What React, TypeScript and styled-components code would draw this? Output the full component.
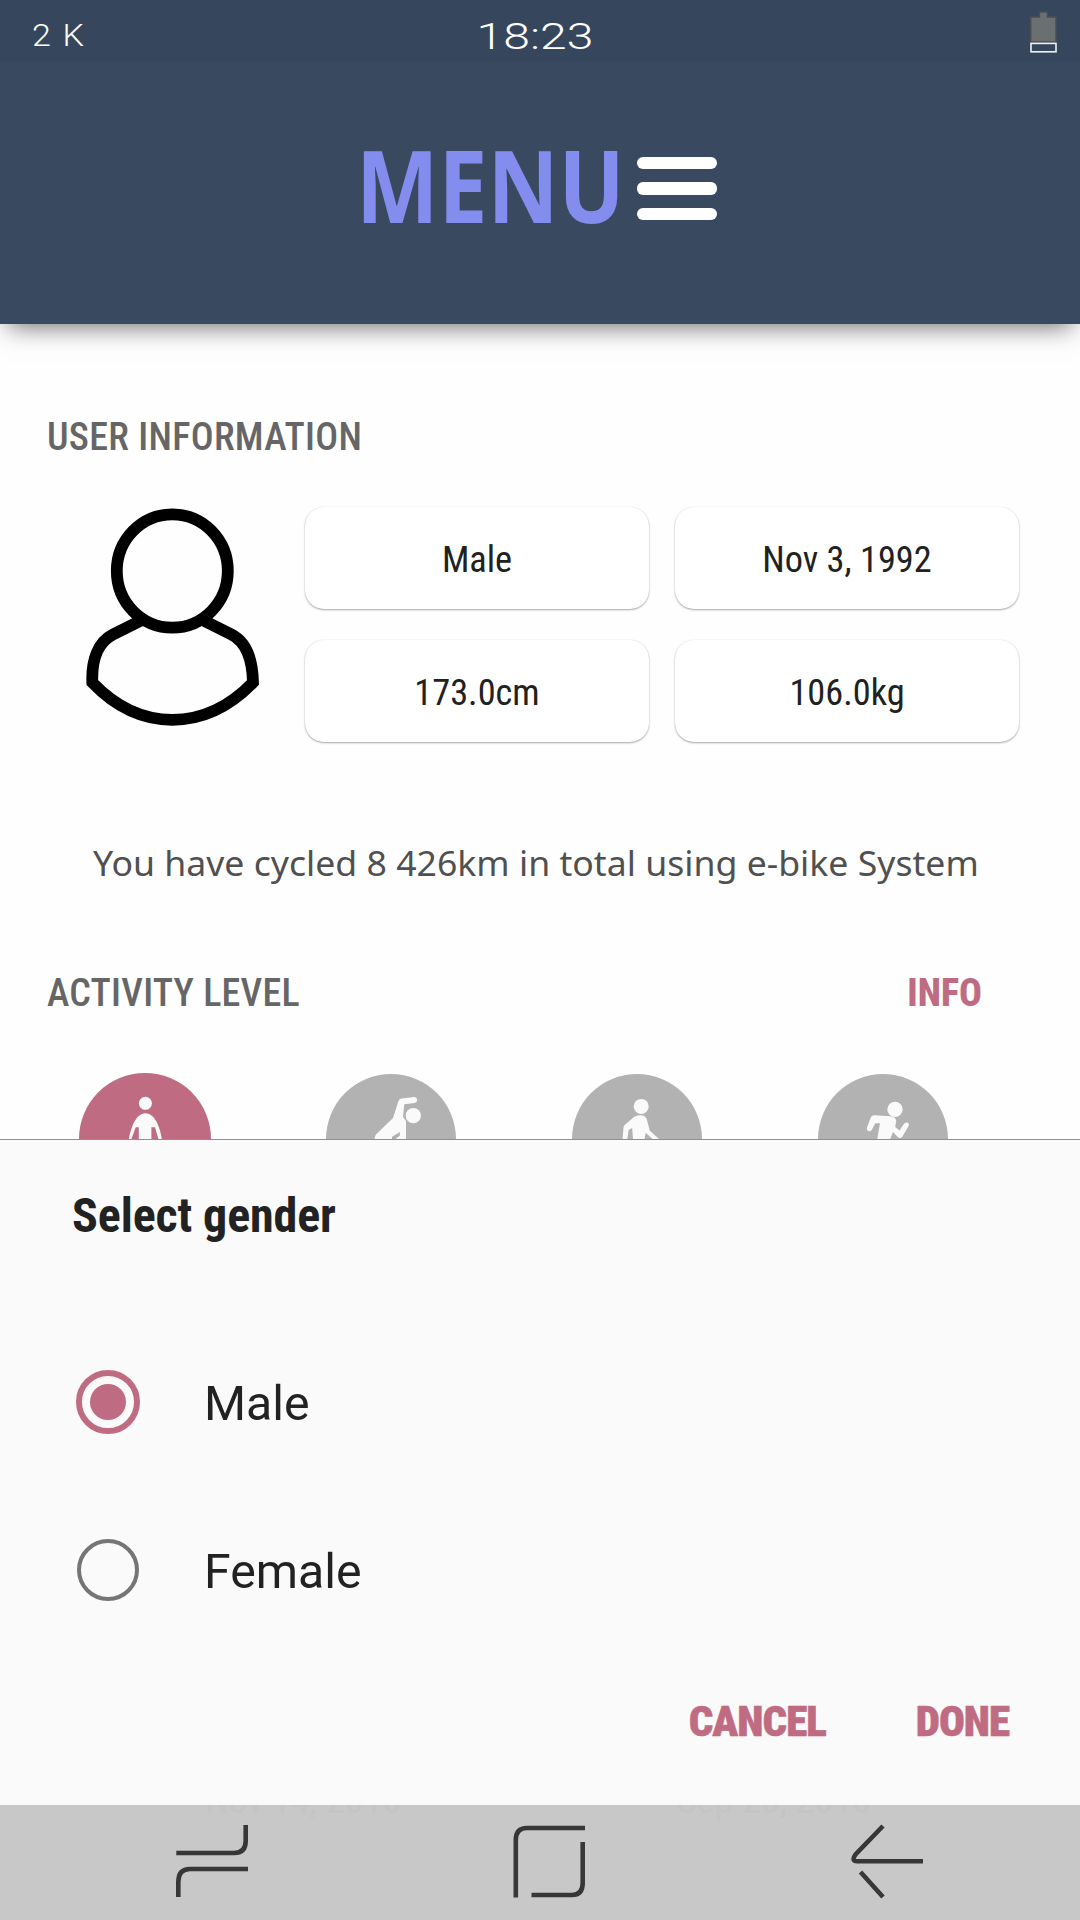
import React, { useState } from 'react';
import styled, { createGlobalStyle } from 'styled-components';

const accent = '#bf6b82';
const condensed = '"Roboto Condensed", Roboto, sans-serif';

const GlobalStyle = createGlobalStyle`
  *, *::before, *::after { box-sizing: border-box; }
  body { margin: 0; background: #fff; }
  button { border: 0; padding: 0; margin: 0; background: none; font: inherit; color: inherit; cursor: pointer; }
`;

const Screen = styled.main`
  display: flex;
  flex-direction: column;
  width: 1080px;
  height: 1920px;
  overflow: hidden;
  background: #fefefe;
  font-family: ${condensed};
`;

const Header = styled.header`
  flex: none;
  display: flex;
  flex-direction: column;
  height: 324px;
  background: #394a60;
  box-shadow: 0 10px 24px -8px rgba(0, 0, 0, 0.6);
`;

const StatusBar = styled.div`
  flex: none;
  display: grid;
  grid-template-columns: 1fr auto 1fr;
  height: 62px;
  padding: 0 22px 0 32px;
  background: #36475d;
  color: #fff;
  font-family: Roboto, sans-serif;
`;

const Network = styled.span`
  justify-self: start;
  margin-top: 16px;
  font-size: 31px;
  line-height: 40px;
  font-weight: 300;
  word-spacing: 3px;
  transform: scaleX(1.1);
  transform-origin: left;
`;

const Clock = styled.time`
  margin: 17px 0 0 -21px;
  font-size: 37px;
  line-height: 40px;
  font-weight: 350;
  transform: scaleX(1.3);
`;

const BatteryIcon = styled.svg`
  justify-self: end;
  width: 30px;
  height: 46px;
  margin-top: 9px;
`;

const MenuButton = styled.button`
  display: flex;
  align-items: center;
  width: 362px;
  height: 110px;
  margin: 69px 0 0 356px;
`;

const MenuLabel = styled.span`
  width: 281px;
  margin-top: -5px;
  color: #838dee;
  font: 700 101px/110px "Open Sans", sans-serif;
  text-align: left;
  transform: scaleX(0.866);
  transform-origin: left;
  white-space: nowrap;
`;

const MenuBars = styled.span`
  flex: none;
  display: flex;
  flex-direction: column;
  gap: 13px;
  width: 80px;
  margin-top: 5px;
`;

const MenuBar = styled.span`
  height: 12.6px;
  border-radius: 6px;
  background: #fff;
`;

const Content = styled.section`
  flex: none;
  display: flex;
  flex-direction: column;
  height: 815px;
  padding-top: 93px;
  overflow: hidden;
`;

const SectionTitle = styled.h2<{ $tracking: number }>`
  margin: 0;
  color: #666;
  font-size: 38px;
  line-height: 40px;
  font-weight: 500;
  letter-spacing: ${(p) => p.$tracking}px;
`;

const TitleRow = styled.div`
  display: flex;
  justify-content: space-between;
  padding: 0 98px 0 47px;
`;

const Profile = styled.div`
  display: flex;
  gap: 45px;
  height: 237px;
  margin-top: 49px;
  padding-left: 86px;
`;

const UserIcon = styled.svg`
  flex: none;
  width: 174px;
  height: 222px;
`;

const Fields = styled.div`
  display: grid;
  grid-template-columns: 344px 344px;
  grid-auto-rows: 102px;
  gap: 31px 26px;
  padding-top: 1px;
`;

const Field = styled.button`
  padding-top: 4px;
  border-radius: 19px;
  background: #fff;
  box-shadow: 0 1px 2px rgba(0, 0, 0, 0.34), 0 0 1px rgba(0, 0, 0, 0.12);
  color: #212121;
  font-size: 36.3px;
  line-height: 40px;
  text-align: center;
`;

const Distance = styled.p`
  margin: 97px 0 87px 93px;
  width: 860px;
  color: #505050;
  font: 400 34px/46px "Noto Sans", "Open Sans", sans-serif;
  white-space: nowrap;
  transform: scaleX(1.048);
  transform-origin: left;
`;

const InfoButton = styled.button`
  color: ${accent};
  font-size: 38px;
  line-height: 40px;
  font-weight: 800;
`;

const Activities = styled.div`
  display: grid;
  grid-template-columns: repeat(4, 246px);
  justify-items: center;
  align-items: start;
  height: 66px;
  margin: 60px 0 0 22px;
  overflow: hidden;
`;

const Activity = styled.button<{ $active?: boolean }>`
  width: ${(p) => (p.$active ? 132 : 130)}px;
  height: ${(p) => (p.$active ? 132 : 130)}px;
  margin-top: ${(p) => (p.$active ? 0 : 1)}px;
  border-radius: 50%;
  background: ${(p) => (p.$active ? accent : '#b2b2b2')};
  color: #fafafa;
`;

const Figure = styled.svg`
  display: block;
  width: 100%;
  height: 100%;
`;

const Sheet = styled.section`
  flex: none;
  display: flex;
  flex-direction: column;
  height: 666px;
  padding: 46px 72px 0;
  border-top: 1px solid #8f8f8f;
  background: #fafafa;
`;

const SheetTitle = styled.h1`
  margin: 0 0 116px;
  color: #222;
  font-size: 48px;
  line-height: 60px;
  font-weight: 700;
  letter-spacing: -0.1px;
`;

const Options = styled.div`
  display: flex;
  flex-direction: column;
  gap: 88px;
`;

const Option = styled.button`
  display: flex;
  align-items: center;
  gap: 64px;
  height: 80px;
  padding-left: 4px;
`;

const Radio = styled.span<{ $checked: boolean }>`
  flex: none;
  display: grid;
  place-items: center;
  width: ${(p) => (p.$checked ? 64 : 62)}px;
  height: ${(p) => (p.$checked ? 64 : 62)}px;
  margin: ${(p) => (p.$checked ? 0 : 1)}px;
  border: ${(p) => (p.$checked ? `6.4px solid ${accent}` : '4px solid #757575')};
  border-radius: 50%;

  &::after {
    content: '';
    width: 36px;
    height: 36px;
    border-radius: 50%;
    background: ${(p) => (p.$checked ? accent : 'transparent')};
  }
`;

const OptionLabel = styled.span`
  padding-top: 3px;
  color: #222;
  font: 400 48.2px/60px Roboto, sans-serif;
`;

const Actions = styled.div`
  display: flex;
  justify-content: flex-end;
  gap: 90px;
  margin: 86px -1px 0 0;
`;

const ActionButton = styled.button`
  color: ${accent};
  font-size: 43px;
  line-height: 50px;
  font-weight: 900;
  letter-spacing: -1px;
  -webkit-text-stroke: 0.5px ${accent};
`;

const NavBar = styled.nav`
  flex: none;
  position: relative;
  display: flex;
  height: 115px;
  padding: 15px 0 0 172px;
  overflow: hidden;
  background: #c8c8c8;
`;

const NavButton = styled.button`
  width: 80px;
  height: 80px;
  margin-right: 258px;
`;

const NavIcon = styled.svg`
  display: block;
  width: 80px;
  height: 80px;
  fill: none;
  stroke: #373737;
  stroke-width: 4.6;
`;

const DatesBehind = styled.div`
  position: absolute;
  top: -25px;
  left: 205px;
  display: flex;
  gap: 276px;
  color: #c4c4c4;
  font-size: 38px;
  line-height: 40px;
`;

const figures = [
  {
    label: 'Low',
    box: '79 1073 132 132',
    head: [145.4, 1103.3, 6.5],
    body: 'M128.8 1139.5C130.5 1130 135 1113.5 145.4 1113.3C156 1113.5 160.500 1130 162 1139.500H158.600L155 1127.300H151.400V1160H138.800V1127.300H135.700L131.300 1139.500Z',
  },
  {
    label: 'Light',
    box: '326 1074 130 130',
    head: [413.3, 1115.7, 7.6],
    body: 'M374.700 1139.500Q374.500 1136.500 376 1134.600L393 1118L398.500 1101Q399.200 1098.900 401.500 1098.600L414 1097Q417 1097 417.100 1100Q417 1102.800 414.500 1103.100L404.300 1104.200L403 1116.700L406 1121V1139.500H394.700L399.800 1135.700V1132L392 1136.700V1139.500Z',
  },
  {
    label: 'Moderate',
    box: '572 1074 130 130',
    head: [641.2, 1106.4, 7.5],
    body: 'M622.500 1139.500L623.500 1127.500Q623.600 1126 624.700 1125L634.300 1116.700Q637.500 1115.100 641.600 1115.300Q645.600 1115.800 646.700 1119L649.800 1130.700L659.600 1139.500H653L645.700 1132.700L644.500 1139.500H633L632.200 1128L628.600 1130L627.300 1139.500Z',
  },
  {
    label: 'High',
    box: '818 1074 130 130',
    head: [895, 1109.4, 7.7],
    body: 'M877.200 1139.500L880 1123.300H875.300L871.800 1129.700Q870.200 1132.200 867.800 1130.700Q866.300 1129.500 867.200 1127L871 1117Q872 1115 874.500 1115.200L890 1116.200Q896 1116.600 896.200 1121L895.200 1127L899.600 1130.500L903.500 1124.500Q905.500 1121.500 908 1122.800Q909.500 1124 908.500 1126.200L902.300 1136.700Q900.300 1139 898 1137.300L893 1132L890 1139.500Z',
  },
] as const;

const options = ['Male', 'Female'];

export default function App() {
  const [gender, setGender] = useState('Male');

  return (
    <>
      <GlobalStyle />
      <Screen>
        <Header>
          <StatusBar>
            <Network>2 K</Network>
            <Clock>18:23</Clock>
            <BatteryIcon viewBox="0 0 30 46">
              <path d="M2.700 33V8H11.500V3H19.500V8H28V33Z" fill="#6a706f" stroke="#474f55" strokeWidth="1.400" />
              <rect x="3" y="34.400" width="25" height="8.400" fill="#36475d" stroke="#f0f2f4" strokeWidth="1.600" />
            </BatteryIcon>
          </StatusBar>
          <MenuButton>
            <MenuLabel>MENU</MenuLabel>
            <MenuBars>
              <MenuBar />
              <MenuBar />
              <MenuBar />
            </MenuBars>
          </MenuButton>
        </Header>

        <Content>
          <TitleRow>
            <SectionTitle $tracking={0.3}>USER INFORMATION</SectionTitle>
          </TitleRow>
          <Profile>
            <UserIcon viewBox="86 506 174 222" fill="none" stroke="#000" strokeWidth="11.8">
              <ellipse cx="172.300" cy="571" rx="55.500" ry="56.600" />
              <path d="M142 620L113 634.500C98 642 91.500 660 92.300 682.500Q128 719.800 172.300 719.800Q217 719.800 253 682.500C252.500 660 246.500 642 231.500 634.500L202.600 620" />
            </UserIcon>
            <Fields>
              <Field>Male</Field>
              <Field>Nov 3, 1992</Field>
              <Field>173.0cm</Field>
              <Field>106.0kg</Field>
            </Fields>
          </Profile>
          <Distance>You have cycled 8 426km in total using e-bike System</Distance>
          <TitleRow>
            <SectionTitle $tracking={0.25}>ACTIVITY LEVEL</SectionTitle>
            <InfoButton>INFO</InfoButton>
          </TitleRow>
          <Activities>
            {figures.map((f, i) => (
              <Activity key={f.label} $active={i === 0} aria-label={f.label}>
                <Figure viewBox={f.box} fill="currentColor">
                  <circle cx={f.head[0]} cy={f.head[1]} r={f.head[2]} />
                  <path d={f.body} />
                </Figure>
              </Activity>
            ))}
          </Activities>
        </Content>

        <Sheet>
          <SheetTitle>Select gender</SheetTitle>
          <Options role="radiogroup">
            {options.map((o) => (
              <Option key={o} role="radio" aria-checked={gender === o} onClick={() => setGender(o)}>
                <Radio $checked={gender === o} />
                <OptionLabel>{o}</OptionLabel>
              </Option>
            ))}
          </Options>
          <Actions>
            <ActionButton>CANCEL</ActionButton>
            <ActionButton>DONE</ActionButton>
          </Actions>
        </Sheet>

        <NavBar>
          <DatesBehind aria-hidden="true">
            <span>Nov 14, 2016</span>
            <span>Sep 25, 2016</span>
          </DatesBehind>
          <NavButton aria-label="Recent apps">
            <NavIcon viewBox="0 0 80 80">
              <path d="M4.300 33H62Q73.700 33 73.700 21V5M6.300 77V62Q6.300 49 18 49H76" />
            </NavIcon>
          </NavButton>
          <NavButton aria-label="Home">
            <NavIcon viewBox="0 0 80 80">
              <path d="M5.800 77.500V20Q5.800 8 17 8H75M72.700 22V63Q72.700 75 62 75H21.500" />
            </NavIcon>
          </NavButton>
          <NavButton aria-label="Back">
            <NavIcon viewBox="0 0 80 80">
              <path d="M35 6L7.500 34.500Q3 41.200 9 41.200H75M12.500 52L35 77" />
            </NavIcon>
          </NavButton>
        </NavBar>
      </Screen>
    </>
  );
}
